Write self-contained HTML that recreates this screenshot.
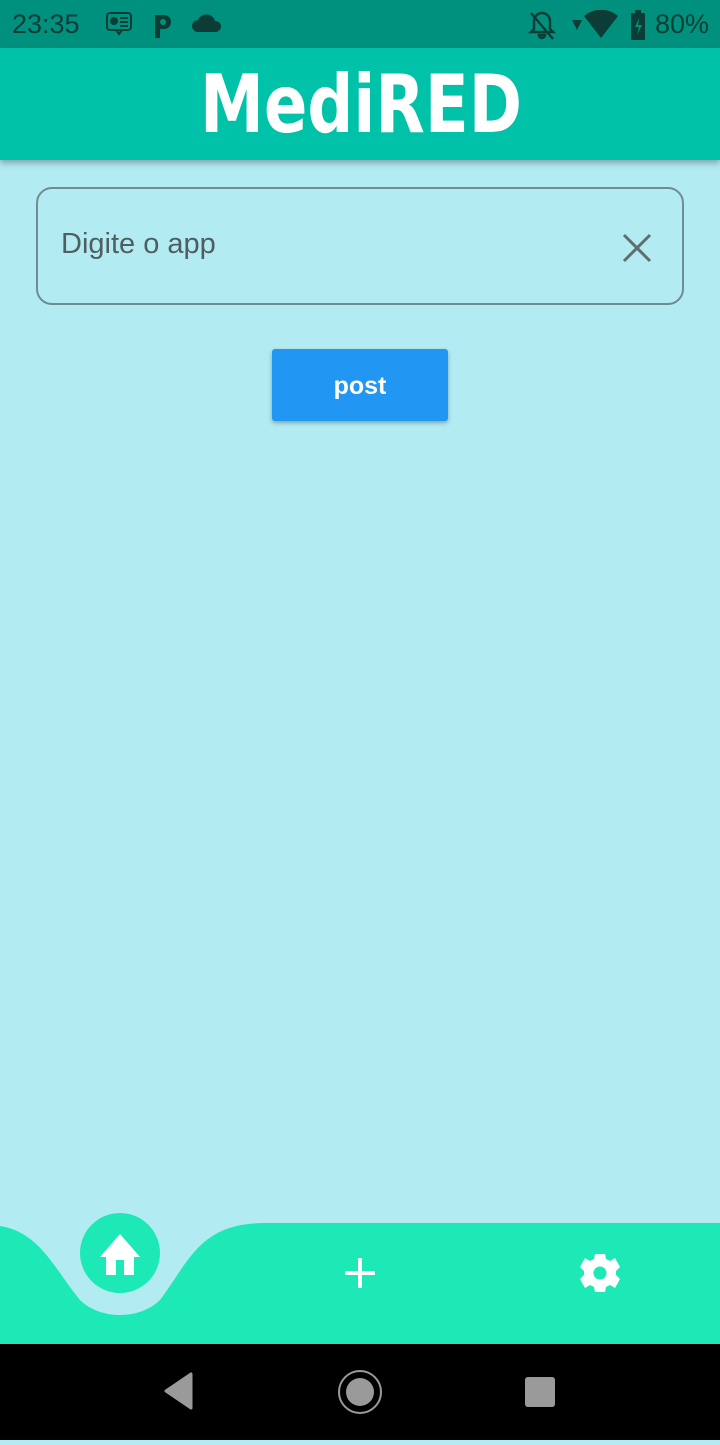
<!DOCTYPE html>
<html><head><meta charset="utf-8"><style>
*{margin:0;padding:0;box-sizing:border-box}
body{width:720px;height:1440px;background:#b2ebf2;font-family:"Liberation Sans","DejaVu Sans",sans-serif;position:relative;overflow:hidden}
.sb{position:absolute;top:0;left:0;width:720px;height:48px;background:#00917e;color:#0b3d36;font-size:27px}
.ab{position:absolute;top:48px;left:0;width:720px;height:112px;background:#00c2a8;box-shadow:0 3px 6px rgba(0,0,0,.3)}
.inp{position:absolute;left:36px;top:187px;width:648px;height:118px;border:2px solid #6f8e91;border-radius:16px}
.inp span{position:absolute;left:23px;top:39px;font-size:29px;color:#4f5f60}
.btn{position:absolute;left:272px;top:349px;width:176px;height:72px;background:#2196f3;border-radius:3px;box-shadow:0 2px 4px rgba(0,0,0,.3);color:#fff;font-size:25px;font-weight:bold;text-align:center;line-height:74px}
.nav{position:absolute;top:1344px;left:0;width:720px;height:96px;background:#000}
</style></head><body>
<div class="sb">
<span style="position:absolute;left:12px;top:9px">23:35</span>
<svg style="position:absolute;left:106px;top:12px" width="26" height="24" viewBox="0 0 26 24"><rect x="1" y="1" width="24" height="17" rx="3" fill="none" stroke="#0b3d36" stroke-width="2"/><circle cx="8" cy="9" r="4" fill="#0b3d36"/><path d="M14 6h8M14 10h8M14 14h8M10 18l3 4 3-4" stroke="#0b3d36" stroke-width="2" fill="none"/></svg>
<svg style="position:absolute;left:152px;top:12px" width="22" height="26" viewBox="0 0 22 26"><path d="M3 26V3h9a7 7 0 010 14H8v9z" fill="#0b3d36"/><circle cx="11" cy="10" r="3" fill="#00917e"/></svg>
<svg style="position:absolute;left:192px;top:14px" width="30" height="18" viewBox="0 0 30 18"><path d="M6 18a6 6 0 010-12 9 9 0 0117 1 5.5 5.5 0 011 11z" fill="#0b3d36"/></svg>
<svg style="position:absolute;left:528px;top:10px" width="28" height="30" viewBox="0 0 28 30"><path d="M14 3a8 8 0 00-8 8v8l-3 3h22l-3-3v-8a8 8 0 00-8-8zM11 25h6a3 3 0 01-6 0zM3 3l22 26" stroke="#0b3d36" stroke-width="2.5" fill="none"/></svg>
<svg style="position:absolute;left:572px;top:20px" width="10" height="10"><path d="M0 0h10L5 10z" fill="#0b3d36"/></svg>
<svg style="position:absolute;left:584px;top:10px" width="34" height="28" viewBox="0 0 34 28"><path d="M0 6a26 26 0 0134 0L17 28z" fill="#0b3d36"/></svg>
<svg style="position:absolute;left:630px;top:10px" width="16" height="30" viewBox="0 0 16 30"><rect x="5" y="0" width="6" height="3" fill="#0b3d36"/><rect x="1" y="3" width="14" height="27" fill="#0b3d36"/><path d="M9 8l-4 9h4l-2 8 5-10H8z" fill="#00917e"/></svg>
<span style="position:absolute;left:655px;top:9px">80%</span>
</div>
<div class="ab"><svg width="720" height="112"><text x="200" y="84" textLength="322" lengthAdjust="spacingAndGlyphs" font-family="DejaVu Sans, sans-serif" font-weight="bold" font-size="80" fill="#fff">MediRED</text></svg></div>
<div class="inp"><span>Digite o app</span>
<svg style="position:absolute;left:584px;top:44px" width="30" height="30" viewBox="0 0 30 30"><path d="M2 2l26 26M28 2L2 28" stroke="#5f6f70" stroke-width="3"/></svg></div>
<div class="btn">post</div>
<svg style="position:absolute;left:0;top:1200px" width="720" height="144" viewBox="0 0 720 144">
<path d="M0 26C40 32 55 70 80 100C100 120 140 120 160 100C190 60 200 23 265 23H720V144H0Z" fill="#1de9b6"/>
<circle cx="120" cy="53" r="40" fill="#1de9b6"/>
<path d="M120 34L100 57h6v18h10v-15h8v15h10v-18h6z" fill="#fff"/>
<path d="M360 58v30M345 73h30" stroke="#fff" stroke-width="4" fill="none"/>
<g transform="translate(600,73)"><path d="M-5-19h10l1 5 4 2 5-3 5 9-4 4v4l4 4-5 9-5-3-4 2-1 5h-10l-1-5-4-2-5 3-5-9 4-4v-4l-4-4 5-9 5 3 4-2z" fill="#fff"/><circle r="6.5" fill="#1de9b6"/></g>
</svg>
<div class="nav">
<svg width="720" height="96"><path d="M191 30v34l-25-17z" fill="#9a9a9a" stroke="#9a9a9a" stroke-width="3" stroke-linejoin="round"/><circle cx="360" cy="48" r="21" fill="none" stroke="#9a9a9a" stroke-width="2"/><circle cx="360" cy="48" r="14" fill="#9a9a9a"/><rect x="525" y="33" width="30" height="30" rx="3" fill="#9a9a9a"/></svg>
</div>
</body></html>
